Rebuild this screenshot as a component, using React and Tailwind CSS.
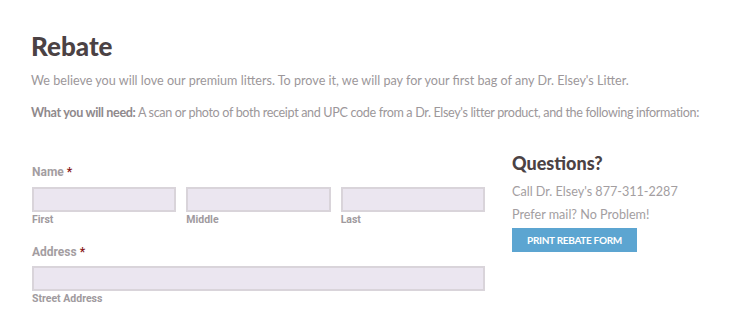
export default function App() {
  const field = 'h-[25px] w-full border-2 border-[#d9d4da] bg-[#ebe6f0]';
  const sub = "mt-[1px] text-[10.5px] font-bold leading-[14px] text-[#a09a9e] font-['Roboto',sans-serif]";
  const label = "text-[12px] font-bold leading-[16px] text-[#a39da1] font-['Roboto',sans-serif]";

  return (
    <div className="h-[310px] w-[750px] overflow-hidden bg-white px-[31px] pt-[31px] font-['Lato',sans-serif]">
      <h1 className="text-[26px] font-black leading-[30px] text-[#4b4244]">Rebate</h1>
      <p className="mt-[11px] whitespace-nowrap text-[12.6px] leading-[18px] text-[#9c979a]">
        We believe you will love our premium litters. To prove it, we will pay for your first bag of any Dr. Elsey's Litter.
      </p>
      <p className="mt-[14px] whitespace-nowrap text-[12.6px] leading-[18px] tracking-[-0.35px] text-[#9c979a]">
        <span className="font-bold text-[#8f898c]">What you will need:</span> A scan or photo of both receipt and UPC code from a Dr. Elsey's litter product, and the following information:
      </p>

      <div className="mt-[42px] flex gap-[27px]">
        <div className="w-[454px] pl-[1px]">
          <div className={label}>
            Name <span className="text-[#8a1a1a]">*</span>
          </div>
          <div className="mt-[7px] grid grid-cols-3 gap-[10px]">
            {['First', 'Middle', 'Last'].map(s => (
              <div key={s}>
                <div className={field} />
                <div className={sub}>{s}</div>
              </div>
            ))}
          </div>
          <div className={`${label} mt-[17px]`}>
            Address <span className="text-[#8a1a1a]">*</span>
          </div>
          <div className="mt-[6px]">
            <div className={field} />
            <div className={sub}>Street Address</div>
          </div>
        </div>

        <div className="-mt-[13px]">
          <h2 className="text-[18px] font-black leading-[24px] text-[#4b4244]">Questions?</h2>
          <p className="mt-[8px] text-[12.6px] leading-[18px] text-[#a39ea1]">Call Dr. Elsey's 877-311-2287</p>
          <p className="mt-[5px] text-[12.6px] leading-[18px] text-[#a39ea1]">Prefer mail? No Problem!</p>
          <button className="mt-[4px] h-[24px] w-[125px] bg-[#5ca5d1] text-[10px] font-bold uppercase tracking-[-0.3px] text-white">
            Print Rebate Form
          </button>
        </div>
      </div>
    </div>
  );
}
